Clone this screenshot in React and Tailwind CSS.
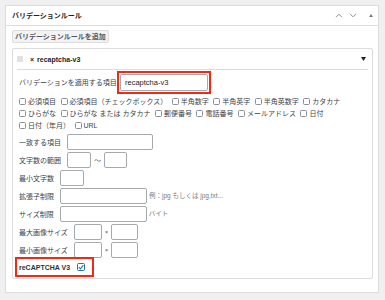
const checkRows = [
  ["必須項目", "必須項目（チェックボックス）", "半角数字", "半角英字", "半角英数字", "カタカナ"],
  ["ひらがな", "ひらがな または カタカナ", "郵便番号", "電話番号", "メールアドレス", "日付"],
  ["日付（年月）", "URL"],
];

function Box() {
  return <span className="block h-[7px] w-[7px] shrink-0 rounded-[1.5px] border border-[#8c8f94] bg-white" />;
}

function Field({ className = "" }) {
  return <span className={`block h-[16px] shrink-0 rounded-[2px] border border-[#a7aaad] bg-white ${className}`} />;
}

function Row({ label, children }) {
  return (
    <div className="flex h-[16px] items-center">
      <span className="mr-[6px] whitespace-nowrap">{label}</span>
      {children}
    </div>
  );
}

export default function App() {
  return (
    <div className="h-[300px] w-[385px] overflow-hidden bg-[#f0f0f1] pl-[5px] pt-[5px] font-['Liberation_Sans','Noto_Sans_CJK_JP',sans-serif] text-[7px] leading-none text-[#3c434a]">
      <div className="h-[288px] w-[374px] border border-[#dcdcde] bg-white">
        <div className="flex h-[20px] items-center border-b border-[#dcdcde] pl-[6px] pr-[5px]">
          <span className="font-bold text-[#1d2327]">バリデーションルール</span>
          <div className="ml-auto flex items-center">
            <svg width="8" height="5" viewBox="0 0 8 5" className="mr-[6px]">
              <path d="M1 4.2 L4 1.2 L7 4.2" fill="none" stroke="#8c8f94" strokeWidth="1" />
            </svg>
            <svg width="8" height="5" viewBox="0 0 8 5" className="mr-[12px]">
              <path d="M1 0.8 L4 3.8 L7 0.8" fill="none" stroke="#8c8f94" strokeWidth="1" />
            </svg>
            <svg width="4" height="3" viewBox="0 0 4 3">
              <polygon points="0,3 2,0 4,3" fill="#787c82" />
            </svg>
          </div>
        </div>

        <div className="pl-[6px]">
          <div className="mt-[4px] inline-flex h-[13px] items-center whitespace-nowrap rounded-[2px] border border-[#dcdcde] bg-[#f3f3f4] px-[2px] font-bold text-[#50575e]">
            バリデーションルールを追加
          </div>

          <div className="mt-[5px] w-[361px] rounded-[2px] border border-[#dcdcde] bg-white pb-[1px]">
            <div className="flex h-[20px] items-center pl-[4px] pr-[6px]">
              <svg width="6" height="6" viewBox="0 0 6 6" className="mr-[7px]">
                <rect x="0" y="0.5" width="6" height="1" fill="#c3c4c7" />
                <rect x="0" y="2.5" width="6" height="1" fill="#c3c4c7" />
                <rect x="0" y="4.5" width="6" height="1" fill="#c3c4c7" />
              </svg>
              <span className="mr-[3px] font-bold text-[#1d2327]">×</span>
              <span className="font-bold text-[#1d2327]">recaptcha-v3</span>
              <svg width="5" height="4" viewBox="0 0 5 4" className="ml-auto">
                <polygon points="0,0 5,0 2.5,4" fill="#1d2327" />
              </svg>
            </div>
            <div className="mx-[4px] h-px bg-[#dcdcde]" />

            <div className="pl-[6px]">
              <div className="mt-[1px] flex h-[23px] items-center">
                <span className="w-[98px] whitespace-nowrap">バリデーションを適用する項目</span>
                <div className="border-2 border-[#f02a14] p-[1px]">
                  <div className="flex h-[17px] w-[88px] items-center rounded-[2px] border border-[#a7aaad] bg-white pl-[4px] text-[7.5px] text-[#1d2327]">
                    recaptcha-v3
                  </div>
                </div>
              </div>

              <div className="mt-[1px]">
                {checkRows.map((row, i) => (
                  <div key={i} className="flex h-[12px] items-center gap-x-[4.5px]">
                    {row.map((item) => (
                      <span key={item} className="flex items-center whitespace-nowrap">
                        <Box />
                        <span className="ml-[2px]">{item}</span>
                      </span>
                    ))}
                  </div>
                ))}
              </div>

              <div className="mt-[3px] flex flex-col gap-[2px]">
                <Row label="一致する項目">
                  <Field className="w-[86px]" />
                </Row>
                <Row label="文字数の範囲">
                  <Field className="w-[24px]" />
                  <span className="mx-[3px] text-[#50575e]">〜</span>
                  <Field className="w-[23px]" />
                </Row>
                <Row label="最小文字数">
                  <Field className="w-[24px]" />
                </Row>
                <Row label="拡張子制限">
                  <Field className="w-[87px]" />
                  <span className="ml-[2px] whitespace-nowrap text-[6.5px] text-[#787c82]">例：jpg もしくは jpg,txt...</span>
                </Row>
                <Row label="サイズ制限">
                  <Field className="w-[87px]" />
                  <span className="ml-[2px] whitespace-nowrap text-[6.5px] text-[#787c82]">バイト</span>
                </Row>
                <Row label="最大画像サイズ">
                  <Field className="w-[28px]" />
                  <span className="mx-[3px] text-[6px] text-[#50575e]">×</span>
                  <Field className="w-[27px]" />
                </Row>
                <Row label="最小画像サイズ">
                  <Field className="w-[28px]" />
                  <span className="mx-[3px] text-[6px] text-[#50575e]">×</span>
                  <Field className="w-[27px]" />
                </Row>
              </div>

              <div className="-ml-[4px] -mt-px inline-flex h-[20px] items-center border-2 border-[#f02a14] pl-[2px] pr-[7px]">
                <span className="mr-[7px] whitespace-nowrap font-semibold text-[#2c3338]">reCAPTCHA V3</span>
                <span className="flex h-[8px] w-[8px] items-center justify-center rounded-[1.5px] border border-[#2271b1] bg-white">
                  <svg width="6" height="6" viewBox="0 0 6 6">
                    <path d="M0.8 3.2 L2.4 4.8 L5.4 1" fill="none" stroke="#2271b1" strokeWidth="1.1" />
                  </svg>
                </span>
              </div>
            </div>
          </div>
        </div>
      </div>
    </div>
  );
}
